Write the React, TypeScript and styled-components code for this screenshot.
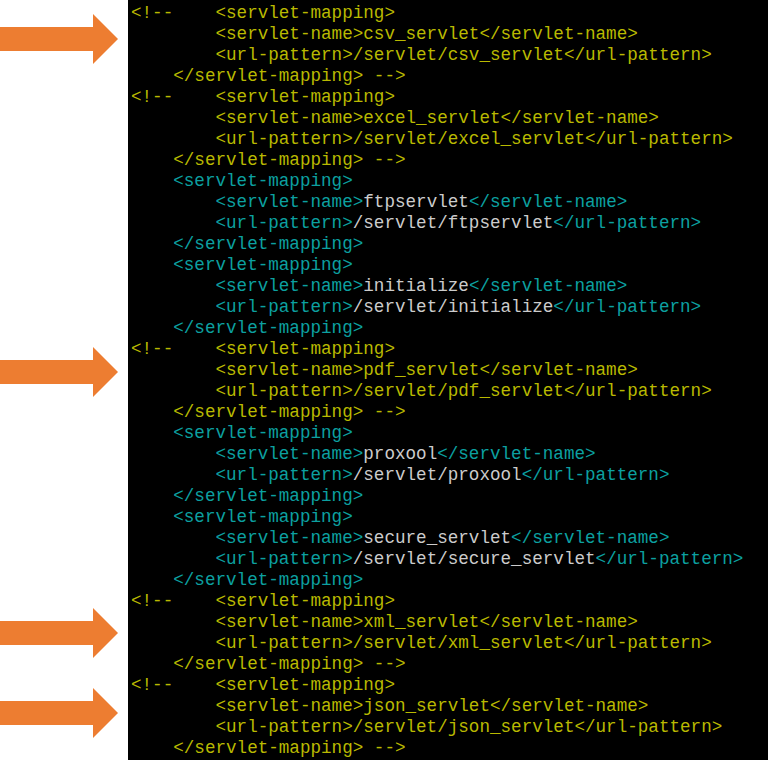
import React from "react";
import styled, { createGlobalStyle } from "styled-components";

const Global = createGlobalStyle`
  html, body { margin: 0; padding: 0; background: #ffffff; }
  body { width: 768px; height: 760px; overflow: hidden; }
`;

const Page = styled.div`
  display: grid;
  grid-template-columns: 128px 640px;
  width: 768px;
  height: 760px;
`;

const Gutter = styled.div`
  background: #ffffff;
  display: flex;
  align-items: center;
`;

const CodeCell = styled.div<{ $first?: boolean; $last?: boolean }>`
  background: #000000;
  padding: ${(p) => (p.$first ? "3px" : "0")} 0 ${(p) => (p.$last ? "10px" : "0")} 3px;
`;

const Line = styled.div`
  font-family: "Liberation Mono", "Courier New", monospace;
  font-size: 17.6px;
  line-height: 21px;
  height: 21px;
  white-space: pre;
  color: #c8c8c8;
`;

const Tok = styled.span<{ $kind: "c" | "t" | "v" }>`
  color: ${(p) => (p.$kind === "c" ? "#b9b900" : p.$kind === "t" ? "#0ca0a0" : "#cccccc")};
`;

const ArrowSvg = styled.svg<{ $shift: number }>`
  display: block;
  width: 118px;
  height: 50px;
  margin-top: ${(p) => p.$shift}px;
`;

const Arrow = ({ shift }: { shift: number }) => (
  <ArrowSvg $shift={shift} viewBox="0 0 118 50">
    <polygon points="0,13 93,13 93,0 118,25 93,50 93,37 0,37" fill="#ED7D31" />
  </ArrowSvg>
);

type Block = { name: string; commented: boolean; arrow?: number };

const blocks: Block[] = [
  { name: "csv_servlet", commented: true, arrow: -9 },
  { name: "excel_servlet", commented: true },
  { name: "ftpservlet", commented: false },
  { name: "initialize", commented: false },
  { name: "pdf_servlet", commented: true, arrow: -18 },
  { name: "proxool", commented: false },
  { name: "secure_servlet", commented: false },
  { name: "xml_servlet", commented: true, arrow: -1 },
  { name: "json_servlet", commented: true, arrow: -18 },
];

const CommentBlock = ({ name }: { name: string }) => (
  <>
    <Line><Tok $kind="c">{"<!--    <servlet-mapping>"}</Tok></Line>
    <Line><Tok $kind="c">{`        <servlet-name>${name}</servlet-name>`}</Tok></Line>
    <Line><Tok $kind="c">{`        <url-pattern>/servlet/${name}</url-pattern>`}</Tok></Line>
    <Line><Tok $kind="c">{"    </servlet-mapping> -->"}</Tok></Line>
  </>
);

const LiveBlock = ({ name }: { name: string }) => (
  <>
    <Line>{"    "}<Tok $kind="t">{"<servlet-mapping>"}</Tok></Line>
    <Line>
      {"        "}<Tok $kind="t">{"<servlet-name>"}</Tok><Tok $kind="v">{name}</Tok><Tok $kind="t">{"</servlet-name>"}</Tok>
    </Line>
    <Line>
      {"        "}<Tok $kind="t">{"<url-pattern>"}</Tok><Tok $kind="v">{`/servlet/${name}`}</Tok><Tok $kind="t">{"</url-pattern>"}</Tok>
    </Line>
    <Line>{"    "}<Tok $kind="t">{"</servlet-mapping>"}</Tok></Line>
  </>
);

export default function App() {
  return (
    <>
      <Global />
      <Page>
        {blocks.map((b, i) => (
          <React.Fragment key={b.name}>
            <Gutter>{b.arrow !== undefined && <Arrow shift={b.arrow} />}</Gutter>
            <CodeCell $first={i === 0} $last={i === blocks.length - 1}>
              {b.commented ? <CommentBlock name={b.name} /> : <LiveBlock name={b.name} />}
            </CodeCell>
          </React.Fragment>
        ))}
      </Page>
    </>
  );
}
